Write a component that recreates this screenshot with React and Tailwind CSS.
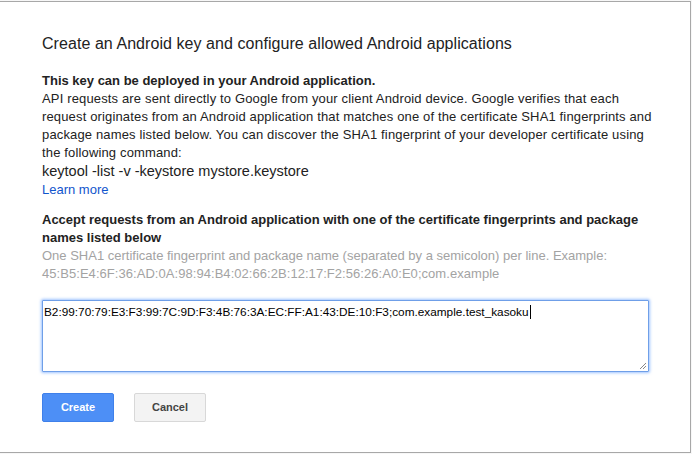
import React from "react";

export default function App() {
  return (
    <div className="w-[692px] h-[454px] bg-[#f7f7f7] overflow-hidden font-['Liberation_Sans',Arial,sans-serif]">
      <div className="flex h-full">
        <div className="mt-px w-[691px] h-[452px] bg-white border-t border-r border-b border-[#a8a8a8] pl-[42px] pt-[32px] text-[#222]">
          <div className="text-[16px] leading-[20px] tracking-[0.06px] whitespace-nowrap text-[#222]">
            Create an Android key and configure allowed Android applications
          </div>
          <div className="mt-[18px] text-[13px] leading-[18px] whitespace-nowrap">
            <div className="font-bold">This key can be deployed in your Android application.</div>
            <div className="tracking-[0.15px]">API requests are sent directly to Google from your client Android device. Google verifies that each</div>
            <div className="tracking-[0.15px]">request originates from an Android application that matches one of the certificate SHA1 fingerprints and</div>
            <div className="tracking-[0.15px]">package names listed below. You can discover the SHA1 fingerprint of your developer certificate using</div>
            <div className="tracking-[0.15px]">the following command:</div>
            <div className="text-[14.5px] leading-[19px]">keytool -list -v -keystore mystore.keystore</div>
            <div className="leading-[17px] text-[#1155cc]">Learn more</div>
          </div>
          <div className="mt-[13px] text-[13px] leading-[18px] whitespace-nowrap">
            <div className="font-bold">Accept requests from an Android application with one of the certificate fingerprints and package</div>
            <div className="font-bold">names listed below</div>
            <div className="text-[#a3a3a3]">One SHA1 certificate fingerprint and package name (separated by a semicolon) per line. Example:</div>
            <div className="text-[#a3a3a3] tracking-[0.05px]">45:B5:E4:6F:36:AD:0A:98:94:B4:02:66:2B:12:17:F2:56:26:A0:E0;com.example</div>
          </div>
          <div className="mt-[17px] w-[607px] h-[72px] border border-[#6f9fe8] rounded-[1px] shadow-[0_0_3px_1px_rgba(77,144,254,0.55)] bg-white relative pl-[1px] pr-[2px] pt-[4px]">
            <div className="text-[11.8px] leading-[14px] whitespace-nowrap text-black flex items-center">
              <span>B2:99:70:79:E3:F3:99:7C:9D:F3:4B:76:3A:EC:FF:A1:43:DE:10:F3;com.example.test_kasoku</span>
              <span className="inline-block w-px h-[14px] bg-black ml-px"></span>
            </div>
            <svg className="absolute right-[1px] bottom-[1px]" width="9" height="9" viewBox="0 0 9 9">
              <line x1="8" y1="2" x2="2" y2="8" stroke="#888" strokeWidth="1" />
              <line x1="8" y1="5" x2="5" y2="8" stroke="#888" strokeWidth="1" />
            </svg>
          </div>
          <div className="mt-[21px] flex gap-[20px]">
            <div className="w-[72px] h-[29px] rounded-[2px] bg-[#4d8ff6] border border-[#3f80ea] text-white text-[11px] font-bold flex items-center justify-center">
              Create
            </div>
            <div className="w-[72px] h-[29px] rounded-[2px] bg-[#f3f3f3] border border-[#d8d8d8] text-[#444] text-[11px] font-bold flex items-center justify-center">
              Cancel
            </div>
          </div>
        </div>
      </div>
    </div>
  );
}
